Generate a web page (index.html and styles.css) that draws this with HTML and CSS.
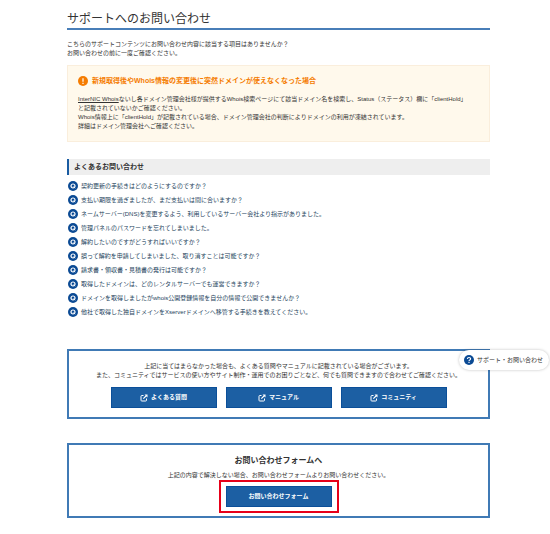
FILE: index.html
```html
<!DOCTYPE html>
<html lang="ja">
<head>
<meta charset="utf-8">
<meta name="viewport" content="width=device-width, initial-scale=1">
<title>サポートへのお問い合わせ</title>
<link rel="stylesheet" href="styles.css">
</head>
<body>
<svg class="sprite" aria-hidden="true">
  <symbol id="external" viewBox="0 0 16 16">
    <path d="M7 3H3.5Q2 3 2 4.500V12.500Q2 14 3.500 14H11.500Q13 14 13 12.500V9" fill="none" stroke="currentColor" stroke-width="2"/>
    <path d="M9 1H15V7L12.800 4.800L7.500 10.100L5.900 8.500L11.200 3.200Z" fill="currentColor"/>
  </symbol>
  <symbol id="q" viewBox="0 0 20 20">
    <circle cx="10" cy="10" r="10" fill="#0b4a94"/>
    <circle cx="10" cy="10" r="4" fill="none" stroke="#fff" stroke-width="2.400"/>
    <path d="M10.500 11L14 14.500" stroke="#fff" stroke-width="2"/>
  </symbol>
</svg>
<main class="page">
  <h1 class="page-title">サポートへのお問い合わせ</h1>
  <p class="lead">こちらのサポートコンテンツにお問い合わせ内容に該当する項目はありませんか？<br>お問い合わせの前に一度ご確認ください。</p>

  <section class="notice">
    <h2 class="notice-title">
      <svg class="notice-icon" viewBox="0 0 20 20" aria-hidden="true"><circle cx="10" cy="10" r="10" fill="#f57c00"/><path d="M10 4.500V11.500M10 13.500V16" stroke="#fff" stroke-width="2.400"/></svg>
      新規取得後やWhois情報の変更後に突然ドメインが使えなくなった場合
    </h2>
    <p class="notice-text"><a href="#">InterNIC Whois</a>ないし各ドメイン管理会社様が提供するWhois検索ページにて該当ドメイン名を検索し、Status（ステータス）欄に「clientHold」<br>と記載されていないかご確認ください。<br>Whois情報上に「clientHold」が記載されている場合、ドメイン管理会社の判断によりドメインの利用が凍結されています。<br>詳細はドメイン管理会社へご確認ください。</p>
  </section>

  <h2 class="faq-title">よくあるお問い合わせ</h2>
  <ul class="faq">
    <li><a href="#"><svg class="q" aria-hidden="true"><use href="#q"/></svg>契約更新の手続きはどのようにするのですか？</a></li>
    <li><a href="#"><svg class="q" aria-hidden="true"><use href="#q"/></svg>支払い期限を過ぎましたが、まだ支払いは間に合いますか？</a></li>
    <li><a href="#"><svg class="q" aria-hidden="true"><use href="#q"/></svg>ネームサーバー(DNS)を変更するよう、利用しているサーバー会社より指示がありました。</a></li>
    <li><a href="#"><svg class="q" aria-hidden="true"><use href="#q"/></svg>管理パネルのパスワードを忘れてしまいました。</a></li>
    <li><a href="#"><svg class="q" aria-hidden="true"><use href="#q"/></svg>解約したいのですがどうすればいいですか？</a></li>
    <li><a href="#"><svg class="q" aria-hidden="true"><use href="#q"/></svg>誤って解約を申請してしまいました、取り消すことは可能ですか？</a></li>
    <li><a href="#"><svg class="q" aria-hidden="true"><use href="#q"/></svg>請求書・領収書・見積書の発行は可能ですか？</a></li>
    <li><a href="#"><svg class="q" aria-hidden="true"><use href="#q"/></svg>取得したドメインは、どのレンタルサーバーでも運営できますか？</a></li>
    <li><a href="#"><svg class="q" aria-hidden="true"><use href="#q"/></svg>ドメインを取得しましたがwhois公開登録情報を自分の情報で公開できませんか？</a></li>
    <li><a href="#"><svg class="q" aria-hidden="true"><use href="#q"/></svg>他社で取得した独自ドメインをXserverドメインへ移管する手続きを教えてください。</a></li>
  </ul>

  <section class="panel links-panel">
    <p>上記に当てはまらなかった場合も、よくある質問やマニュアルに記載されている場合がございます。<br>また、コミュニティではサービスの使い方やサイト制作・運用でのお困りごとなど、何でも質問できますので合わせてご確認ください。</p>
    <div class="buttons">
      <a class="button" href="#"><svg class="external" aria-hidden="true"><use href="#external"/></svg>よくある質問</a>
      <a class="button" href="#"><svg class="external" aria-hidden="true"><use href="#external"/></svg>マニュアル</a>
      <a class="button" href="#"><svg class="external" aria-hidden="true"><use href="#external"/></svg>コミュニティ</a>
    </div>
  </section>

  <section class="panel form-panel">
    <h2 class="form-title">お問い合わせフォームへ</h2>
    <p>上記の内容で解決しない場合、お問い合わせフォームよりお問い合わせください。</p>
    <div class="highlight"><a class="button" href="#">お問い合わせフォーム</a></div>
  </section>
</main>
<button class="support" type="button">
  <svg class="support-icon" viewBox="0 0 20 20" aria-hidden="true"><circle cx="10" cy="10" r="10" fill="#0b4a94"/><path d="M6.800 8Q6.800 5 10 5Q13.200 5 13.200 7.600Q13.200 9 11.500 10Q10 10.900 10 12.200M10 13.600V15.800" fill="none" stroke="#fff" stroke-width="2.200"/></svg>
  サポート・お問い合わせ
</button>
</body>
</html>
```
FILE: styles.css
```css
* {
  box-sizing: border-box;
}

body {
  margin: 0;
  background: #fff;
  color: #333;
  font: 6px/9px "Liberation Sans", "Noto Sans CJK JP", sans-serif;
}

h1, h2, p, ul {
  margin: 0;
  padding: 0;
}

.sprite {
  position: absolute;
  width: 0;
  height: 0;
}

.page {
  padding: 10px 60px 16px 67px;
}

.page-title {
  border-bottom: 2px solid #487eb8;
  font-size: 12px;
  font-weight: 400;
  line-height: 18px;
}

.lead {
  margin-top: 10px;
}

.notice {
  margin-top: 7px;
  padding: 10px;
  border: 1px solid #faeedc;
  background: #fff9ec;
}

.notice-title {
  display: flex;
  align-items: center;
  gap: 4px;
  margin-bottom: 9px;
  color: #f57c00;
  font-size: 7px;
  line-height: 10px;
}

.notice-icon {
  width: 10px;
  height: 10px;
}

.notice-text a {
  color: inherit;
}

.faq-title {
  margin-top: 17px;
  padding-left: 5px;
  border-left: 2px solid #1a5ca2;
  background: #eee;
  font-size: 7px;
  line-height: 16px;
}

.faq {
  margin-top: 4px;
  padding-left: 1px;
  list-style: none;
}

.faq a {
  display: flex;
  align-items: center;
  gap: 3px;
  color: #243f5c;
  line-height: 14px;
  text-decoration: none;
}

.q {
  width: 10px;
  height: 10px;
}

.panel {
  border: 2px solid #407ab5;
  text-align: center;
}

.links-panel {
  margin-top: 30px;
  padding: 11px 0 9px;
}

.buttons {
  display: flex;
  justify-content: center;
  gap: 9px;
  margin-top: 7px;
}

.button {
  display: flex;
  align-items: center;
  justify-content: center;
  gap: 3px;
  width: 106px;
  height: 21px;
  border: 1px solid #0b4f99;
  background: #1c5fa3;
  color: #fff;
  font-weight: 700;
  text-decoration: none;
}

.external {
  width: 8px;
  height: 8px;
}

.form-panel {
  margin-top: 24px;
  padding: 10px 0 3px;
}

.form-title {
  margin-bottom: 4px;
  font-size: 8px;
  line-height: 12px;
}

.highlight {
  width: fit-content;
  margin: 0 auto;
  padding: 4px 5px;
  border: 2px solid #e60019;
}

.support {
  position: absolute;
  top: 350px;
  right: 1px;
  display: flex;
  align-items: center;
  gap: 3px;
  padding: 5px 6px 5px 5px;
  border: 0;
  border-radius: 10px;
  background: #fff;
  box-shadow: 0 0 3px rgb(0 0 0 / 25%);
  color: #333;
  font: inherit;
}

.support-icon {
  width: 10px;
  height: 10px;
}
```
